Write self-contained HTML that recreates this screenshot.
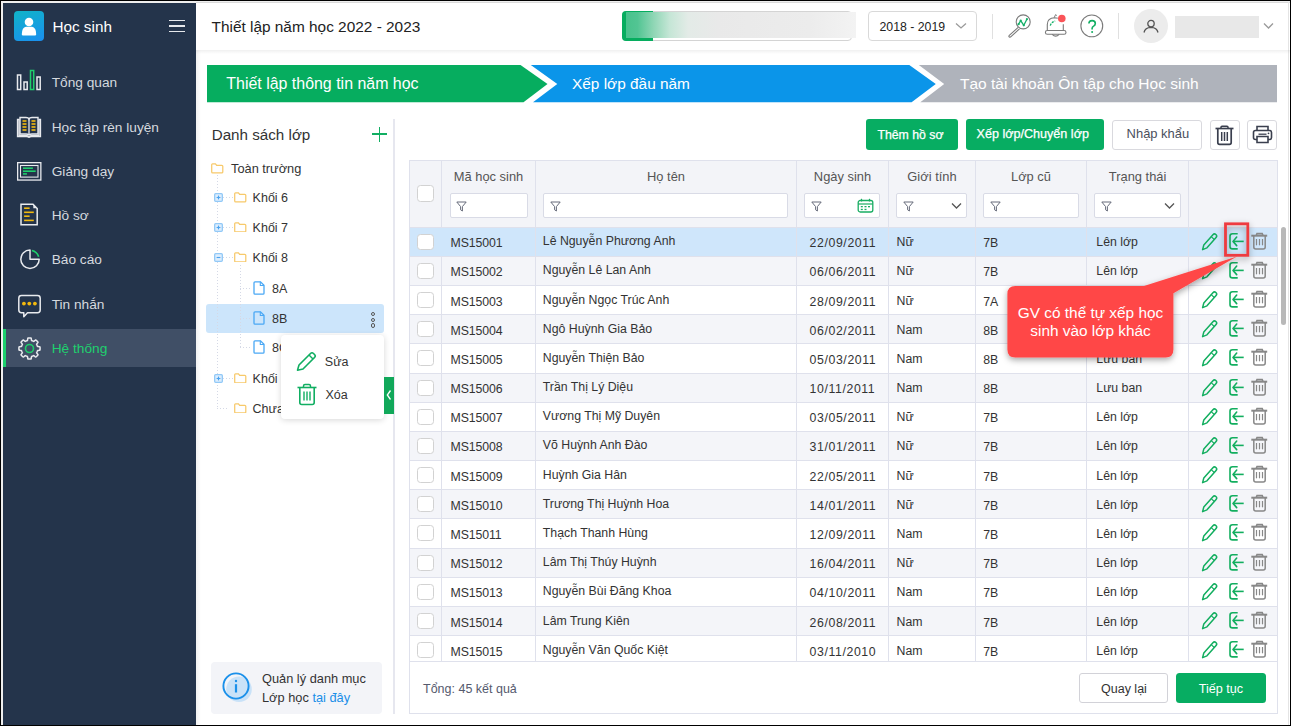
<!DOCTYPE html>
<html><head><meta charset="utf-8"><title>Thiết lập năm học</title>
<style>
html,body{margin:0;padding:0;}
body{width:1291px;height:726px;overflow:hidden;background:#000;position:relative;font-family:'Liberation Sans', sans-serif;}
.a{position:absolute;}
.t{position:absolute;white-space:nowrap;font-family:'Liberation Sans', sans-serif;}
svg{display:block;}
</style></head><body>
<div class="a" style="left:1px;top:1px;width:1289px;height:724px;background:#efefef;"></div><div class="a" style="left:196px;top:2px;width:1094px;height:723px;background:#fff;"></div><div class="a" style="left:3px;top:3px;width:193px;height:722px;background:#24344b;"></div><div class="a" style="left:14px;top:11px;width:30px;height:30px;border-radius:4px;background:linear-gradient(160deg,#10b4c8,#1a8ff0);"></div><svg class="a" style="left:14px;top:11px" width="30" height="30" viewBox="0 0 30 30"><circle cx="15" cy="11" r="4.3" fill="#fff"/><path d="M7.8 23.5 Q7.8 16.5 12 15.8 L18 15.8 Q22.2 16.5 22.2 23.5 Q22.2 24.5 21 24.5 L9 24.5 Q7.8 24.5 7.8 23.5Z" fill="#fff"/></svg><div class="t " style="left:52.4px;top:18.8px;font-size:15.3px;line-height:15.3px;color:#fff;">Học sinh</div><div class="a" style="left:169px;top:19.7px;width:16px;height:1.6px;background:#e6e8ec;"></div><div class="a" style="left:169px;top:25.2px;width:16px;height:1.6px;background:#e6e8ec;"></div><div class="a" style="left:169px;top:30.7px;width:16px;height:1.6px;background:#e6e8ec;"></div><div class="a" style="left:3px;top:329px;width:193px;height:38px;background:#404f66;"></div><div class="a" style="left:3px;top:329px;width:3px;height:38px;background:#1ccf6c;"></div><div class="t " style="left:51.7px;top:76.4px;font-size:13.7px;line-height:13.7px;color:#d5d9df;">Tổng quan</div><div class="t " style="left:51.7px;top:121.4px;font-size:13.7px;line-height:13.7px;color:#d5d9df;">Học tập rèn luyện</div><div class="t " style="left:51.7px;top:165.4px;font-size:13.7px;line-height:13.7px;color:#d5d9df;">Giảng dạy</div><div class="t " style="left:51.7px;top:209.4px;font-size:13.7px;line-height:13.7px;color:#d5d9df;">Hồ sơ</div><div class="t " style="left:51.7px;top:253.4px;font-size:13.7px;line-height:13.7px;color:#d5d9df;">Báo cáo</div><div class="t " style="left:51.7px;top:298.4px;font-size:13.7px;line-height:13.7px;color:#d5d9df;">Tin nhắn</div><div class="t " style="left:51.7px;top:342.4px;font-size:13.7px;line-height:13.7px;color:#1fd06e;">Hệ thống</div><svg class="a" style="left:16px;top:69px" width="26" height="22" viewBox="0 0 26 22">
<rect x="1.5" y="6" width="3.2" height="14.5" fill="none" stroke="#e8eaee" stroke-width="1.5"/>
<rect x="8" y="13" width="3.2" height="7.5" fill="none" stroke="#e8eaee" stroke-width="1.5"/>
<rect x="14.5" y="1.5" width="3.2" height="19" fill="none" stroke="#1fcf6c" stroke-width="1.5"/>
<rect x="21" y="8" width="3.2" height="12.5" fill="none" stroke="#e8eaee" stroke-width="1.5"/>
</svg><svg class="a" style="left:16px;top:116px" width="26" height="22" viewBox="0 0 26 22">
<path d="M1.5 3.5 H3 V19.5 H10 Q12 19.5 13 21 Q14 19.5 16 19.5 H23 V3.5 H24.5 V20.5 H15.5 Q13.5 20.5 13 21.5 Q12.5 20.5 10.5 20.5 H1.5Z" fill="none" stroke="#e8eaee" stroke-width="1.3"/>
<path d="M4 1.5 H10 Q12.5 1.5 13 3 Q13.5 1.5 16 1.5 H22 V18 H16 Q14 18 13 19 Q12 18 10 18 H4Z" fill="none" stroke="#e8eaee" stroke-width="1.4"/>
<line x1="13" y1="3" x2="13" y2="18.5" stroke="#e8eaee" stroke-width="1.3"/>
<g stroke="#f2b90f" stroke-width="1.6"><line x1="6.5" y1="5" x2="10.5" y2="5"/><line x1="6.5" y1="8" x2="10.5" y2="8"/><line x1="6.5" y1="11" x2="10.5" y2="11"/><line x1="6.5" y1="14" x2="10.5" y2="14"/>
<line x1="15.5" y1="5" x2="19.5" y2="5"/><line x1="15.5" y1="8" x2="19.5" y2="8"/><line x1="15.5" y1="11" x2="19.5" y2="11"/><line x1="15.5" y1="14" x2="19.5" y2="14"/></g>
</svg><svg class="a" style="left:16px;top:161px" width="27" height="21" viewBox="0 0 27 21">
<rect x="1.65" y="1.65" width="23.2" height="17.4" fill="none" stroke="#e8eaee" stroke-width="1.3"/>
<rect x="4.5" y="4.5" width="17.5" height="11.6" fill="none" stroke="#e8eaee" stroke-width="1.1"/>
<g stroke="#1fcf6c" stroke-width="1.6"><line x1="7" y1="7.2" x2="16.9" y2="7.2"/><line x1="7" y1="10.2" x2="19.7" y2="10.2"/><line x1="7" y1="12.9" x2="10.9" y2="12.9"/></g>
</svg><svg class="a" style="left:19px;top:202px" width="20" height="25" viewBox="0 0 20 25">
<path d="M2 2.2 H14 L18.2 6.5 V22.8 H2Z" fill="none" stroke="#e8eaee" stroke-width="1.5"/>
<path d="M14.3 2.2 L18.2 6.3 H14.3Z" fill="#e8eaee"/>
<g stroke="#f2b90f" stroke-width="1.6"><line x1="5.1" y1="6.2" x2="10.6" y2="6.2"/><line x1="5.1" y1="10.3" x2="14.8" y2="10.3"/><line x1="5.1" y1="14.2" x2="10.6" y2="14.2"/><line x1="5.1" y1="18.4" x2="14.8" y2="18.4"/></g>
</svg><svg class="a" style="left:14px;top:244px" width="32" height="32" viewBox="14 244 32 32">
<path d="M30 250.1 A9.2 9.2 0 1 0 39.2 259.3 H30 Z" fill="none" stroke="#e8eaee" stroke-width="1.5" stroke-linejoin="round"/>
<path d="M31.9 250.5 A9 9 0 0 1 38.65 256.8" fill="none" stroke="#1fcf6c" stroke-width="1.6"/>
</svg><svg class="a" style="left:17px;top:294px" width="25" height="25" viewBox="0 0 25 25">
<path d="M4.5 1.5 H20.5 Q23.2 1.5 23.2 4.2 V16 Q23.2 18.7 20.5 18.7 H10.5 L6.8 22.8 V18.7 H4.5 Q1.8 18.7 1.8 16 V4.2 Q1.8 1.5 4.5 1.5Z" fill="none" stroke="#e8eaee" stroke-width="1.5" stroke-linejoin="round"/>
<g fill="#f2b90f"><circle cx="6.9" cy="9.6" r="1.9"/><circle cx="12.3" cy="9.6" r="1.9"/><circle cx="17.9" cy="9.6" r="1.9"/></g>
</svg><svg class="a" style="left:16.8px;top:335.8px" width="25" height="25" viewBox="0 0 25 25">
<path d="M12.50 1.90 L12.68 1.90 L12.87 1.91 L13.05 1.91 L13.24 1.93 L13.42 1.94 L13.61 1.96 L13.79 1.98 L13.98 2.00 L14.14 2.15 L14.26 2.51 L14.34 3.01 L14.40 3.57 L14.45 4.07 L14.51 4.43 L14.62 4.58 L14.76 4.62 L14.90 4.66 L15.03 4.70 L15.17 4.75 L15.30 4.79 L15.44 4.84 L15.57 4.90 L15.70 4.95 L15.84 5.01 L15.97 5.07 L16.09 5.13 L16.22 5.19 L16.35 5.26 L16.48 5.33 L16.60 5.40 L16.78 5.37 L17.08 5.16 L17.47 4.84 L17.91 4.49 L18.32 4.19 L18.66 4.02 L18.88 4.03 L19.03 4.15 L19.17 4.26 L19.31 4.38 L19.45 4.50 L19.59 4.62 L19.73 4.75 L19.86 4.87 L20.00 5.00 L20.13 5.14 L20.25 5.27 L20.38 5.41 L20.50 5.55 L20.62 5.69 L20.74 5.83 L20.85 5.97 L20.97 6.12 L20.98 6.34 L20.81 6.68 L20.51 7.09 L20.16 7.53 L19.84 7.92 L19.63 8.22 L19.60 8.40 L19.67 8.52 L19.74 8.65 L19.81 8.78 L19.87 8.91 L19.93 9.03 L19.99 9.16 L20.05 9.30 L20.10 9.43 L20.16 9.56 L20.21 9.70 L20.25 9.83 L20.30 9.97 L20.34 10.10 L20.38 10.24 L20.42 10.38 L20.57 10.49 L20.93 10.55 L21.43 10.60 L21.99 10.66 L22.49 10.74 L22.85 10.86 L23.00 11.02 L23.02 11.21 L23.04 11.39 L23.06 11.58 L23.07 11.76 L23.09 11.95 L23.09 12.13 L23.10 12.32 L23.10 12.50 L23.10 12.68 L23.09 12.87 L23.09 13.05 L23.07 13.24 L23.06 13.42 L23.04 13.61 L23.02 13.79 L23.00 13.98 L22.85 14.14 L22.49 14.26 L21.99 14.34 L21.43 14.40 L20.93 14.45 L20.57 14.51 L20.42 14.62 L20.38 14.76 L20.34 14.90 L20.30 15.03 L20.25 15.17 L20.21 15.30 L20.16 15.44 L20.10 15.57 L20.05 15.70 L19.99 15.84 L19.93 15.97 L19.87 16.09 L19.81 16.22 L19.74 16.35 L19.67 16.48 L19.60 16.60 L19.63 16.78 L19.84 17.08 L20.16 17.47 L20.51 17.91 L20.81 18.32 L20.98 18.66 L20.97 18.88 L20.85 19.03 L20.74 19.17 L20.62 19.31 L20.50 19.45 L20.38 19.59 L20.25 19.73 L20.13 19.86 L20.00 20.00 L19.86 20.13 L19.73 20.25 L19.59 20.38 L19.45 20.50 L19.31 20.62 L19.17 20.74 L19.03 20.85 L18.88 20.97 L18.66 20.98 L18.32 20.81 L17.91 20.51 L17.47 20.16 L17.08 19.84 L16.78 19.63 L16.60 19.60 L16.48 19.67 L16.35 19.74 L16.22 19.81 L16.09 19.87 L15.97 19.93 L15.84 19.99 L15.70 20.05 L15.57 20.10 L15.44 20.16 L15.30 20.21 L15.17 20.25 L15.03 20.30 L14.90 20.34 L14.76 20.38 L14.62 20.42 L14.51 20.57 L14.45 20.93 L14.40 21.43 L14.34 21.99 L14.26 22.49 L14.14 22.85 L13.98 23.00 L13.79 23.02 L13.61 23.04 L13.42 23.06 L13.24 23.07 L13.05 23.09 L12.87 23.09 L12.68 23.10 L12.50 23.10 L12.32 23.10 L12.13 23.09 L11.95 23.09 L11.76 23.07 L11.58 23.06 L11.39 23.04 L11.21 23.02 L11.02 23.00 L10.86 22.85 L10.74 22.49 L10.66 21.99 L10.60 21.43 L10.55 20.93 L10.49 20.57 L10.38 20.42 L10.24 20.38 L10.10 20.34 L9.97 20.30 L9.83 20.25 L9.70 20.21 L9.56 20.16 L9.43 20.10 L9.30 20.05 L9.16 19.99 L9.03 19.93 L8.91 19.87 L8.78 19.81 L8.65 19.74 L8.52 19.67 L8.40 19.60 L8.22 19.63 L7.92 19.84 L7.53 20.16 L7.09 20.51 L6.68 20.81 L6.34 20.98 L6.12 20.97 L5.97 20.85 L5.83 20.74 L5.69 20.62 L5.55 20.50 L5.41 20.38 L5.27 20.25 L5.14 20.13 L5.00 20.00 L4.87 19.86 L4.75 19.73 L4.62 19.59 L4.50 19.45 L4.38 19.31 L4.26 19.17 L4.15 19.03 L4.03 18.88 L4.02 18.66 L4.19 18.32 L4.49 17.91 L4.84 17.47 L5.16 17.08 L5.37 16.78 L5.40 16.60 L5.33 16.48 L5.26 16.35 L5.19 16.22 L5.13 16.09 L5.07 15.97 L5.01 15.84 L4.95 15.70 L4.90 15.57 L4.84 15.44 L4.79 15.30 L4.75 15.17 L4.70 15.03 L4.66 14.90 L4.62 14.76 L4.58 14.62 L4.43 14.51 L4.07 14.45 L3.57 14.40 L3.01 14.34 L2.51 14.26 L2.15 14.14 L2.00 13.98 L1.98 13.79 L1.96 13.61 L1.94 13.42 L1.93 13.24 L1.91 13.05 L1.91 12.87 L1.90 12.68 L1.90 12.50 L1.90 12.32 L1.91 12.13 L1.91 11.95 L1.93 11.76 L1.94 11.58 L1.96 11.39 L1.98 11.21 L2.00 11.02 L2.15 10.86 L2.51 10.74 L3.01 10.66 L3.57 10.60 L4.07 10.55 L4.43 10.49 L4.58 10.38 L4.62 10.24 L4.66 10.10 L4.70 9.97 L4.75 9.83 L4.79 9.70 L4.84 9.56 L4.90 9.43 L4.95 9.30 L5.01 9.16 L5.07 9.03 L5.13 8.91 L5.19 8.78 L5.26 8.65 L5.33 8.52 L5.40 8.40 L5.37 8.22 L5.16 7.92 L4.84 7.53 L4.49 7.09 L4.19 6.68 L4.02 6.34 L4.03 6.12 L4.15 5.97 L4.26 5.83 L4.38 5.69 L4.50 5.55 L4.62 5.41 L4.75 5.27 L4.87 5.14 L5.00 5.00 L5.14 4.87 L5.27 4.75 L5.41 4.62 L5.55 4.50 L5.69 4.38 L5.83 4.26 L5.97 4.15 L6.12 4.03 L6.34 4.02 L6.68 4.19 L7.09 4.49 L7.53 4.84 L7.92 5.16 L8.22 5.37 L8.40 5.40 L8.52 5.33 L8.65 5.26 L8.78 5.19 L8.91 5.13 L9.03 5.07 L9.16 5.01 L9.30 4.95 L9.43 4.90 L9.56 4.84 L9.70 4.79 L9.83 4.75 L9.97 4.70 L10.10 4.66 L10.24 4.62 L10.38 4.58 L10.49 4.43 L10.55 4.07 L10.60 3.57 L10.66 3.01 L10.74 2.51 L10.86 2.15 L11.02 2.00 L11.21 1.98 L11.39 1.96 L11.58 1.94 L11.76 1.93 L11.95 1.91 L12.13 1.91 L12.32 1.90Z" fill="none" stroke="#e8eaee" stroke-width="1.5" stroke-linejoin="round"/>
<circle cx="12.5" cy="12.5" r="4" fill="none" stroke="#1fcf6c" stroke-width="1.6"/>
</svg><div class="a" style="left:196px;top:50px;width:5px;height:675px;background:linear-gradient(90deg,rgba(0,0,0,0.06),rgba(0,0,0,0));"></div><div class="a" style="left:196px;top:2px;width:1094px;height:48px;background:#fff;"></div><div class="a" style="left:196px;top:2px;width:1094px;height:1px;background:#dadada;"></div><div class="a" style="left:1288px;top:2px;width:1px;height:723px;background:#e4e4e4;"></div><div class="a" style="left:196px;top:50px;width:1094px;height:4px;background:linear-gradient(180deg,rgba(0,0,0,0.06),rgba(0,0,0,0));"></div><div class="t " style="left:211.5px;top:18.8px;font-size:15.4px;line-height:15.4px;color:#222;">Thiết lập năm học 2022 - 2023</div><div class="a" style="left:622px;top:11px;width:230px;height:30px;border-radius:4px;box-sizing:border-box;border:1px solid #d4d4d4;"></div><div class="a" style="left:622px;top:11px;width:31px;height:30px;border-radius:4px 0 0 4px;background:#06ad5f;"></div><div class="a" style="left:626px;top:12px;width:230px;height:26px;background:linear-gradient(90deg,#48c28c 0%,#52c593 5%,#8fd6b5 12%,#c5e6d6 19%,#e3ebe7 27%,#e9e9e9 40%,#ececec 80%,#f3f3f3 100%);"></div><div class="a" style="left:868px;top:11px;width:109px;height:30px;border-radius:4px;box-sizing:border-box;border:1px solid #d9d9d9;background:#fff;"></div><div class="t " style="left:879.5px;top:20.6px;font-size:12.3px;line-height:12.3px;color:#222;">2018 - 2019</div><svg class="a" style="left:955px;top:22px" width="12" height="8" viewBox="0 0 12 8"><path d="M1 1.5 L6 6 L11 1.5" fill="none" stroke="#9a9a9a" stroke-width="1.3"/></svg><div class="a" style="left:992px;top:14px;width:1px;height:25px;background:#e0e0e0;"></div><svg class="a" style="left:1004px;top:10px" width="30" height="30" viewBox="1004 10 30 30">
<circle cx="1023.2" cy="21.9" r="7" fill="none" stroke="#7a7a7a" stroke-width="1.1"/>
<path d="M1018.2 27.4 L1009.3 35.3 Q1008.3 36.3 1009.4 37 Q1010.2 37.5 1011 36.6 L1019.5 28.9" fill="none" stroke="#7a7a7a" stroke-width="1.1"/>
<path d="M1018.6 24.2 L1020.7 20.6 L1023.8 25.3 L1026.9 19.2" fill="none" stroke="#14b068" stroke-width="1.3" stroke-linejoin="round"/>
<g fill="#14b068"><circle cx="1018.6" cy="24.2" r="1.1"/><circle cx="1020.7" cy="20.6" r="1.1"/><circle cx="1023.8" cy="25.3" r="1.1"/><circle cx="1026.9" cy="19.2" r="1.1"/></g>
</svg><svg class="a" style="left:1040px;top:10px" width="30" height="30" viewBox="1040 10 30 30">
<path d="M1047.3 30.5 V24.5 Q1047.3 17.9 1054.6 17.7 Q1056.5 17.7 1057.8 18.2" fill="none" stroke="#7a7a7a" stroke-width="1.1"/>
<path d="M1063.3 24.2 V30.5" fill="none" stroke="#7a7a7a" stroke-width="1.1"/>
<rect x="1045.4" y="30.5" width="20.6" height="3.8" rx="1.9" fill="none" stroke="#7a7a7a" stroke-width="1.1"/>
<path d="M1052.2 34.3 Q1055.7 37.8 1059.2 34.3" fill="none" stroke="#7a7a7a" stroke-width="1.1"/>
<path d="M1054.2 17.6 L1055.6 14.6 L1056.8 15.6" fill="none" stroke="#7a7a7a" stroke-width="1"/>
<path d="M1050.3 25.6 Q1051.3 22.2 1055.2 21" fill="none" stroke="#14b068" stroke-width="1.3" stroke-dasharray="2.2 1"/>
<circle cx="1061.8" cy="18.5" r="3.8" fill="#fa5458"/>
</svg><svg class="a" style="left:1078px;top:12px" width="28" height="28" viewBox="1078 12 28 28">
<circle cx="1091.8" cy="25.9" r="10.9" fill="none" stroke="#7a7a7a" stroke-width="1.1"/>
<path d="M1088.9 23.6 Q1088.9 20.6 1092.1 20.6 Q1095.3 20.6 1095.3 23.4 Q1095.3 25.1 1093.6 26.1 Q1092.1 26.9 1092.1 28.6 V29.4" fill="none" stroke="#11ae62" stroke-width="1.6"/>
<circle cx="1092.1" cy="32" r="1" fill="#11ae62"/>
</svg><div class="a" style="left:1118px;top:13px;width:1px;height:26px;background:#e0e0e0;"></div><div class="a" style="left:1134px;top:9px;width:34px;height:34px;border-radius:50%;background:#ececec;"></div><svg class="a" style="left:1141px;top:18.8px" width="20" height="16" viewBox="0 0 20 16">
<circle cx="10" cy="4.6" r="3.2" fill="none" stroke="#555" stroke-width="1.3"/>
<path d="M3 13.5 Q4 8.5 10 8.3 Q16 8.5 17 13.5" fill="none" stroke="#555" stroke-width="1.3"/>
</svg><div class="a" style="left:1175px;top:16px;width:84px;height:22px;background:#e8e8e8;"></div><svg class="a" style="left:1263px;top:22px" width="11" height="8" viewBox="0 0 11 8"><path d="M1 1.5 L5.5 6 L10 1.5" fill="none" stroke="#9a9a9a" stroke-width="1.3"/></svg><svg class="a" style="left:207px;top:65px" width="1071" height="38" viewBox="0 0 1071 38">
<path d="M0 0 H313.5 L340.5 18.9 L316.5 37.3 H0Z" fill="#06ad5f"/>
<path d="M323.8 0 H702.3 L728.8 18.9 L704.6 37.3 H326 L350.3 18.9Z" fill="#0b95e9"/>
<path d="M711.8 0 H1070 V37.3 H713.3 L737.2 18.9Z" fill="#afb3bb"/>
</svg><div class="t " style="left:226.3px;top:75.5px;font-size:15.95px;line-height:15.95px;color:#fff;">Thiết lập thông tin năm học</div><div class="t " style="left:572.0px;top:76.0px;font-size:15.4px;line-height:15.4px;color:#fff;">Xếp lớp đầu năm</div><div class="t " style="left:960.0px;top:75.9px;font-size:15.5px;line-height:15.5px;color:#fff;">Tạo tài khoản Ôn tập cho Học sinh</div><div class="t " style="left:211.7px;top:127.3px;font-size:15.2px;line-height:15.2px;color:#333;">Danh sách lớp</div><div class="a" style="left:372px;top:133.2px;width:15px;height:1.6px;background:#11ae62;"></div><div class="a" style="left:378.7px;top:127px;width:1.6px;height:15px;background:#11ae62;"></div><div class="a" style="left:393px;top:119px;width:2px;height:595px;background:#e6e7ef;"></div><div class="a" style="left:217px;top:175px;width:1px;height:234px;background-image:linear-gradient(#d5d9e6 33%, transparent 33%);background-size:1px 3px;"></div><div class="a" style="left:240px;top:265px;width:1px;height:83px;background-image:linear-gradient(#d5d9e6 33%, transparent 33%);background-size:1px 3px;"></div><div class="a" style="left:223px;top:197px;width:11px;height:1px;background-image:linear-gradient(90deg,#d5d9e6 33%, transparent 33%);background-size:3px 1px;"></div><div class="a" style="left:223px;top:227px;width:11px;height:1px;background-image:linear-gradient(90deg,#d5d9e6 33%, transparent 33%);background-size:3px 1px;"></div><div class="a" style="left:223px;top:257px;width:11px;height:1px;background-image:linear-gradient(90deg,#d5d9e6 33%, transparent 33%);background-size:3px 1px;"></div><div class="a" style="left:223px;top:378px;width:11px;height:1px;background-image:linear-gradient(90deg,#d5d9e6 33%, transparent 33%);background-size:3px 1px;"></div><div class="a" style="left:217px;top:408px;width:12px;height:1px;background-image:linear-gradient(90deg,#d5d9e6 33%, transparent 33%);background-size:3px 1px;"></div><div class="a" style="left:240px;top:288px;width:12px;height:1px;background-image:linear-gradient(90deg,#d5d9e6 33%, transparent 33%);background-size:3px 1px;"></div><div class="a" style="left:240px;top:347px;width:12px;height:1px;background-image:linear-gradient(90deg,#d5d9e6 33%, transparent 33%);background-size:3px 1px;"></div><svg class="a" style="left:211px;top:163px" width="12.5" height="10.5" viewBox="0 0 13 11"><path d="M0.7 2 Q0.7 0.8 1.7 0.8 H4.6 L5.9 2.4 H11.3 Q12.3 2.4 12.3 3.4 V9.3 Q12.3 10.3 11.3 10.3 H1.7 Q0.7 10.3 0.7 9.3Z" fill="none" stroke="#f7c96a" stroke-width="1.3"/></svg><div class="t " style="left:231.0px;top:162.9px;font-size:12.8px;line-height:12.8px;color:#333;">Toàn trường</div><svg class="a" style="left:213.5px;top:193.3px" width="9" height="9" viewBox="0 0 9 9"><rect x="0.65" y="0.65" width="7.7" height="7.7" rx="1" fill="#dcedfd" stroke="#92c9f7" stroke-width="1.3"/><line x1="2.6" y1="4.5" x2="6.4" y2="4.5" stroke="#4aa3f0" stroke-width="1.1"/><line x1="4.5" y1="2.6" x2="4.5" y2="6.4" stroke="#4aa3f0" stroke-width="1.1"/></svg><svg class="a" style="left:234px;top:192.3px" width="12.5" height="10.5" viewBox="0 0 13 11"><path d="M0.7 2 Q0.7 0.8 1.7 0.8 H4.6 L5.9 2.4 H11.3 Q12.3 2.4 12.3 3.4 V9.3 Q12.3 10.3 11.3 10.3 H1.7 Q0.7 10.3 0.7 9.3Z" fill="none" stroke="#f7c96a" stroke-width="1.3"/></svg><div class="t " style="left:252.6px;top:192.2px;font-size:12.5px;line-height:12.5px;color:#333;">Khối 6</div><svg class="a" style="left:213.5px;top:222.9px" width="9" height="9" viewBox="0 0 9 9"><rect x="0.65" y="0.65" width="7.7" height="7.7" rx="1" fill="#dcedfd" stroke="#92c9f7" stroke-width="1.3"/><line x1="2.6" y1="4.5" x2="6.4" y2="4.5" stroke="#4aa3f0" stroke-width="1.1"/><line x1="4.5" y1="2.6" x2="4.5" y2="6.4" stroke="#4aa3f0" stroke-width="1.1"/></svg><svg class="a" style="left:234px;top:221.9px" width="12.5" height="10.5" viewBox="0 0 13 11"><path d="M0.7 2 Q0.7 0.8 1.7 0.8 H4.6 L5.9 2.4 H11.3 Q12.3 2.4 12.3 3.4 V9.3 Q12.3 10.3 11.3 10.3 H1.7 Q0.7 10.3 0.7 9.3Z" fill="none" stroke="#f7c96a" stroke-width="1.3"/></svg><div class="t " style="left:252.6px;top:221.8px;font-size:12.5px;line-height:12.5px;color:#333;">Khối 7</div><svg class="a" style="left:213.5px;top:252.8px" width="9" height="9" viewBox="0 0 9 9"><rect x="0.65" y="0.65" width="7.7" height="7.7" rx="1" fill="#dcedfd" stroke="#92c9f7" stroke-width="1.3"/><line x1="2.6" y1="4.5" x2="6.4" y2="4.5" stroke="#4aa3f0" stroke-width="1.1"/></svg><svg class="a" style="left:234px;top:251.8px" width="12.5" height="10.5" viewBox="0 0 13 11"><path d="M0.7 2 Q0.7 0.8 1.7 0.8 H4.6 L5.9 2.4 H11.3 Q12.3 2.4 12.3 3.4 V9.3 Q12.3 10.3 11.3 10.3 H1.7 Q0.7 10.3 0.7 9.3Z" fill="none" stroke="#f7c96a" stroke-width="1.3"/></svg><div class="t " style="left:252.6px;top:251.7px;font-size:12.5px;line-height:12.5px;color:#333;">Khối 8</div><svg class="a" style="left:213.5px;top:373.7px" width="9" height="9" viewBox="0 0 9 9"><rect x="0.65" y="0.65" width="7.7" height="7.7" rx="1" fill="#dcedfd" stroke="#92c9f7" stroke-width="1.3"/><line x1="2.6" y1="4.5" x2="6.4" y2="4.5" stroke="#4aa3f0" stroke-width="1.1"/><line x1="4.5" y1="2.6" x2="4.5" y2="6.4" stroke="#4aa3f0" stroke-width="1.1"/></svg><svg class="a" style="left:234px;top:372.7px" width="12.5" height="10.5" viewBox="0 0 13 11"><path d="M0.7 2 Q0.7 0.8 1.7 0.8 H4.6 L5.9 2.4 H11.3 Q12.3 2.4 12.3 3.4 V9.3 Q12.3 10.3 11.3 10.3 H1.7 Q0.7 10.3 0.7 9.3Z" fill="none" stroke="#f7c96a" stroke-width="1.3"/></svg><div class="t " style="left:252.6px;top:372.6px;font-size:12.5px;line-height:12.5px;color:#333;">Khối 9</div><svg class="a" style="left:234px;top:402.5px" width="12.5" height="10.5" viewBox="0 0 13 11"><path d="M0.7 2 Q0.7 0.8 1.7 0.8 H4.6 L5.9 2.4 H11.3 Q12.3 2.4 12.3 3.4 V9.3 Q12.3 10.3 11.3 10.3 H1.7 Q0.7 10.3 0.7 9.3Z" fill="none" stroke="#f7c96a" stroke-width="1.3"/></svg><div class="t " style="left:252.6px;top:402.6px;font-size:12.5px;line-height:12.5px;color:#333;">Chưa phân khối</div><div class="a" style="left:206px;top:304px;width:178px;height:29px;border-radius:3px;background:#cce5fb;"></div><div class="a" style="left:217px;top:304px;width:1px;height:29px;background-image:linear-gradient(#d5d9e6 33%, transparent 33%);background-size:1px 3px;"></div><div class="a" style="left:240px;top:304px;width:1px;height:29px;background-image:linear-gradient(#d5d9e6 33%, transparent 33%);background-size:1px 3px;"></div><div class="a" style="left:240px;top:318px;width:12px;height:1px;background-image:linear-gradient(90deg,#d5d9e6 33%, transparent 33%);background-size:3px 1px;"></div><svg class="a" style="left:253px;top:280.8px" width="12" height="14" viewBox="0 0 12 14"><path d="M1 1.8 Q1 0.8 2 0.8 H7.5 L11 4.3 V12.2 Q11 13.2 10 13.2 H2 Q1 13.2 1 12.2Z" fill="none" stroke="#4aa8f5" stroke-width="1.3"/><path d="M7.3 0.8 V4.5 H11" fill="none" stroke="#4aa8f5" stroke-width="1.1"/></svg><div class="t " style="left:272.0px;top:282.8px;font-size:12.5px;line-height:12.5px;color:#333;">8A</div><svg class="a" style="left:253px;top:311.0px" width="12" height="14" viewBox="0 0 12 14"><path d="M1 1.8 Q1 0.8 2 0.8 H7.5 L11 4.3 V12.2 Q11 13.2 10 13.2 H2 Q1 13.2 1 12.2Z" fill="none" stroke="#4aa8f5" stroke-width="1.3"/><path d="M7.3 0.8 V4.5 H11" fill="none" stroke="#4aa8f5" stroke-width="1.1"/></svg><div class="t " style="left:272.0px;top:313.0px;font-size:12.5px;line-height:12.5px;color:#333;">8B</div><svg class="a" style="left:253px;top:339.8px" width="12" height="14" viewBox="0 0 12 14"><path d="M1 1.8 Q1 0.8 2 0.8 H7.5 L11 4.3 V12.2 Q11 13.2 10 13.2 H2 Q1 13.2 1 12.2Z" fill="none" stroke="#4aa8f5" stroke-width="1.3"/><path d="M7.3 0.8 V4.5 H11" fill="none" stroke="#4aa8f5" stroke-width="1.1"/></svg><div class="t " style="left:272.0px;top:341.8px;font-size:12.5px;line-height:12.5px;color:#333;">8C</div><div class="a" style="left:370.6px;top:311.6px;width:4.4px;height:4.4px;box-sizing:border-box;border:1.2px solid #555;border-radius:50%;"></div><div class="a" style="left:370.6px;top:317.5px;width:4.4px;height:4.4px;box-sizing:border-box;border:1.2px solid #555;border-radius:50%;"></div><div class="a" style="left:370.6px;top:323.4px;width:4.4px;height:4.4px;box-sizing:border-box;border:1.2px solid #555;border-radius:50%;"></div><div class="a" style="left:281px;top:334.5px;width:103px;height:84px;border-radius:4px;background:#fff;box-shadow:0 1px 6px rgba(0,0,0,0.16);"></div><svg class="a" style="left:295px;top:351px" width="22" height="21" viewBox="0 0 22 21">
<path d="M2.5 19.2 L4 14 L15.5 2.5 Q17 1 18.5 2.5 L19.5 3.5 Q21 5 19.5 6.5 L8 18 Z" fill="none" stroke="#11ae62" stroke-width="1.6" stroke-linejoin="round"/>
<line x1="14" y1="4" x2="18" y2="8" stroke="#11ae62" stroke-width="1.4"/>
</svg><div class="t " style="left:324.8px;top:355.6px;font-size:12.5px;line-height:12.5px;color:#333;">Sửa</div><svg class="a" style="left:296px;top:383px" width="22" height="23" viewBox="0 0 22 23">
<path d="M1.5 4.5 H20.5" stroke="#11ae62" stroke-width="1.6"/>
<path d="M7.5 4.5 V3 Q7.5 1.5 9 1.5 H13 Q14.5 1.5 14.5 3 V4.5" fill="none" stroke="#11ae62" stroke-width="1.5"/>
<path d="M3.8 4.5 V19.5 Q3.8 21.5 5.8 21.5 H16.2 Q18.2 21.5 18.2 19.5 V4.5" fill="none" stroke="#11ae62" stroke-width="1.6"/>
<g stroke="#11ae62" stroke-width="1.4"><line x1="8" y1="8.5" x2="8" y2="17.5"/><line x1="11" y1="8.5" x2="11" y2="17.5"/><line x1="14" y1="8.5" x2="14" y2="17.5"/></g>
</svg><div class="t " style="left:325.5px;top:389.1px;font-size:12.5px;line-height:12.5px;color:#333;">Xóa</div><div class="a" style="left:384px;top:376.5px;width:10px;height:37.5px;background:#11a85a;"></div><svg class="a" style="left:385px;top:389px" width="8" height="12" viewBox="0 0 8 12"><path d="M5.5 1.5 L2.3 6 L5.5 10.5" fill="none" stroke="#fff" stroke-width="1.3"/></svg><div class="a" style="left:211px;top:661.5px;width:171px;height:52px;border-radius:4px;background:#f3f4f8;"></div><svg class="a" style="left:219px;top:669px" width="36" height="36" viewBox="0 0 36 36">
<circle cx="20" cy="20.3" r="12.8" fill="#c9e2f8"/>
<circle cx="17" cy="17" r="12.6" fill="none" stroke="#1a90ea" stroke-width="1.9"/>
<line x1="17" y1="15.2" x2="17" y2="23.5" stroke="#1a90ea" stroke-width="2.2"/>
<circle cx="17" cy="12" r="1.2" fill="#1a90ea"/>
</svg><div class="t " style="left:262.0px;top:672.9px;font-size:12.8px;line-height:12.8px;color:#333;">Quản lý danh mục</div><div class="t " style="left:262.0px;top:692.1px;font-size:12.8px;line-height:12.8px;color:#333;">Lớp học <span style="color:#1a8fe8">tại đây</span></div><div class="a" style="left:866px;top:119px;width:92px;height:30.5px;border-radius:3px;background:#07ad62;"></div><div class="t " style="left:877.4px;top:128.7px;font-size:12.3px;line-height:12.3px;color:#fff;-webkit-text-stroke:0.25px #fff;">Thêm hồ sơ</div><div class="a" style="left:966px;top:119px;width:138px;height:30.5px;border-radius:3px;background:#07ad62;"></div><div class="t " style="left:976.5px;top:128.4px;font-size:12.6px;line-height:12.6px;color:#fff;-webkit-text-stroke:0.25px #fff;">Xếp lớp/Chuyển lớp</div><div class="a" style="left:1111.5px;top:119.5px;width:90px;height:30px;border-radius:3px;box-sizing:border-box;border:1px solid #d9d9de;background:#fff;"></div><div class="t " style="left:1126.6px;top:128.1px;font-size:12.95px;line-height:12.95px;color:#4a4f5c;">Nhập khẩu</div><div class="a" style="left:1209.5px;top:119.5px;width:30px;height:30px;border-radius:3px;box-sizing:border-box;border:1px solid #d9d9de;background:#fff;"></div><svg class="a" style="left:1214px;top:125px" width="21" height="21" viewBox="0 0 21 21">
<path d="M1.5 3.5 H19.5" stroke="#3a3f4e" stroke-width="1.7"/>
<path d="M7 3.3 V2.2 Q7 1.2 8 1.2 H13 Q14 1.2 14 2.2 V3.3" fill="none" stroke="#3a3f4e" stroke-width="1.5"/>
<path d="M3.8 3.5 V17.5 Q3.8 19.3 5.6 19.3 H15.4 Q17.2 19.3 17.2 17.5 V3.5" fill="none" stroke="#3a3f4e" stroke-width="1.7"/>
<g stroke="#3a3f4e" stroke-width="1.5"><line x1="7.7" y1="7" x2="7.7" y2="16"/><line x1="10.5" y1="7" x2="10.5" y2="16"/><line x1="13.3" y1="7" x2="13.3" y2="16"/></g>
</svg><div class="a" style="left:1247px;top:119.5px;width:30px;height:30px;border-radius:3px;box-sizing:border-box;border:1px solid #d9d9de;background:#fff;"></div><svg class="a" style="left:1252px;top:125px" width="21" height="19" viewBox="0 0 21 19">
<path d="M5 5.5 V1.5 H16 V5.5" fill="none" stroke="#3a3f4e" stroke-width="1.6"/>
<path d="M5 14.5 H3.5 Q1.5 14.5 1.5 12.5 V7.5 Q1.5 5.5 3.5 5.5 H17.5 Q19.5 5.5 19.5 7.5 V12.5 Q19.5 14.5 17.5 14.5 H16" fill="none" stroke="#3a3f4e" stroke-width="1.6"/>
<path d="M5 11.5 H16 V17.5 H5Z" fill="none" stroke="#3a3f4e" stroke-width="1.6"/>
<line x1="6.5" y1="9.2" x2="14.5" y2="9.2" stroke="#3a3f4e" stroke-width="1.3"/>
<circle cx="16.5" cy="8.3" r="0.9" fill="#3a3f4e"/>
</svg><div class="a" style="left:409.5px;top:160.5px;width:868.2px;height:67px;background:#f3f4f8;"></div><div class="a" style="left:0;top:227px;width:1291px;height:434px;overflow:hidden;"><div class="a" style="left:409.5px;top:1px;width:868.2px;height:29px;background:#cfe6fb;"></div><div class="a" style="left:417px;top:6.60px;width:16.5px;height:16.5px;box-sizing:border-box;border:1px solid #d2d2d2;border-radius:3.5px;background:#fff;"></div><div class="t " style="left:450.5px;top:9.7px;font-size:12.3px;line-height:12.3px;color:#333;letter-spacing:-0.1px;">MS15001</div><div class="t " style="left:542.8px;top:8.3px;font-size:12.3px;line-height:12.3px;color:#333;">Lê Nguyễn Phương Anh</div><div class="t " style="left:809.6px;top:9.7px;font-size:12.3px;line-height:12.3px;color:#333;letter-spacing:0.6px;">22/09/2011</div><div class="t " style="left:896.6px;top:8.9px;font-size:12.3px;line-height:12.3px;color:#333;">Nữ</div><div class="t " style="left:983.2px;top:9.7px;font-size:12.3px;line-height:12.3px;color:#333;">7B</div><div class="t " style="left:1096.3px;top:8.9px;font-size:12.3px;line-height:12.3px;color:#333;">Lên lớp</div><svg class="a" style="left:1198px;top:0.30px" width="72" height="29" viewBox="1198 0 72 29">
<g transform="translate(0 0.7)"><path d="M1202.6 21.9 L1203.8 17.36 L1212.93 7.01 A2.1 2.1 0 0 1 1216.08 9.79 L1206.96 20.14 Z" fill="none" stroke="#12ae5f" stroke-width="1.5" stroke-linejoin="round"/>
<line x1="1211.2" y1="8.96" x2="1214.35" y2="11.74" stroke="#12ae5f" stroke-width="1.2"/></g>
<path d="M1237.7 6.8 H1232.5 Q1230 6.8 1230 9.3 V19.4 Q1230 21.9 1232.5 21.9 H1237.7" fill="none" stroke="#12ae5f" stroke-width="1.6"/>
<path d="M1233.2 14.4 H1243.7" stroke="#12ae5f" stroke-width="1.6"/>
<path d="M1236.7 10.1 L1233 14.4 L1236.7 18.6" fill="none" stroke="#12ae5f" stroke-width="1.6" stroke-linejoin="round" stroke-linecap="round"/>
<line x1="1251.3" y1="8.7" x2="1267.2" y2="8.7" stroke="#888" stroke-width="2"/>
<path d="M1256.3 8.2 L1257 6.6 H1262.2 L1262.9 8.2" fill="none" stroke="#888" stroke-width="1.6"/>
<path d="M1253.8 8.6 V20 Q1253.8 22 1255.8 22 H1263.2 Q1265.2 22 1265.2 20 V8.6" fill="none" stroke="#888" stroke-width="1.5"/>
<g stroke="#888" stroke-width="1.2"><line x1="1256.5" y1="12" x2="1256.5" y2="18.3"/><line x1="1259.5" y1="12" x2="1259.5" y2="18.3"/><line x1="1262.5" y1="12" x2="1262.5" y2="18.3"/></g>
</svg><div class="a" style="left:409.5px;top:30px;width:868.2px;height:29px;background:#f4f5f9;"></div><div class="a" style="left:409.5px;top:29px;width:868.2px;height:1px;background:#dfe1ec;"></div><div class="a" style="left:417px;top:35.60px;width:16.5px;height:16.5px;box-sizing:border-box;border:1px solid #d2d2d2;border-radius:3.5px;background:#fff;"></div><div class="t " style="left:450.5px;top:38.7px;font-size:12.3px;line-height:12.3px;color:#333;letter-spacing:-0.1px;">MS15002</div><div class="t " style="left:542.8px;top:37.3px;font-size:12.3px;line-height:12.3px;color:#333;">Nguyễn Lê Lan Anh</div><div class="t " style="left:809.6px;top:38.7px;font-size:12.3px;line-height:12.3px;color:#333;letter-spacing:0.6px;">06/06/2011</div><div class="t " style="left:896.6px;top:37.9px;font-size:12.3px;line-height:12.3px;color:#333;">Nữ</div><div class="t " style="left:983.2px;top:38.7px;font-size:12.3px;line-height:12.3px;color:#333;">7B</div><div class="t " style="left:1096.3px;top:37.9px;font-size:12.3px;line-height:12.3px;color:#333;">Lên lớp</div><svg class="a" style="left:1198px;top:29.30px" width="72" height="29" viewBox="1198 0 72 29">
<g transform="translate(0 0.7)"><path d="M1202.6 21.9 L1203.8 17.36 L1212.93 7.01 A2.1 2.1 0 0 1 1216.08 9.79 L1206.96 20.14 Z" fill="none" stroke="#12ae5f" stroke-width="1.5" stroke-linejoin="round"/>
<line x1="1211.2" y1="8.96" x2="1214.35" y2="11.74" stroke="#12ae5f" stroke-width="1.2"/></g>
<path d="M1237.7 6.8 H1232.5 Q1230 6.8 1230 9.3 V19.4 Q1230 21.9 1232.5 21.9 H1237.7" fill="none" stroke="#12ae5f" stroke-width="1.6"/>
<path d="M1233.2 14.4 H1243.7" stroke="#12ae5f" stroke-width="1.6"/>
<path d="M1236.7 10.1 L1233 14.4 L1236.7 18.6" fill="none" stroke="#12ae5f" stroke-width="1.6" stroke-linejoin="round" stroke-linecap="round"/>
<line x1="1251.3" y1="8.7" x2="1267.2" y2="8.7" stroke="#888" stroke-width="2"/>
<path d="M1256.3 8.2 L1257 6.6 H1262.2 L1262.9 8.2" fill="none" stroke="#888" stroke-width="1.6"/>
<path d="M1253.8 8.6 V20 Q1253.8 22 1255.8 22 H1263.2 Q1265.2 22 1265.2 20 V8.6" fill="none" stroke="#888" stroke-width="1.5"/>
<g stroke="#888" stroke-width="1.2"><line x1="1256.5" y1="12" x2="1256.5" y2="18.3"/><line x1="1259.5" y1="12" x2="1259.5" y2="18.3"/><line x1="1262.5" y1="12" x2="1262.5" y2="18.3"/></g>
</svg><div class="a" style="left:409.5px;top:59px;width:868.2px;height:29px;background:#ffffff;"></div><div class="a" style="left:409.5px;top:58px;width:868.2px;height:1px;background:#dfe1ec;"></div><div class="a" style="left:417px;top:64.60px;width:16.5px;height:16.5px;box-sizing:border-box;border:1px solid #d2d2d2;border-radius:3.5px;background:#fff;"></div><div class="t " style="left:450.5px;top:68.7px;font-size:12.3px;line-height:12.3px;color:#333;letter-spacing:-0.1px;">MS15003</div><div class="t " style="left:542.8px;top:67.3px;font-size:12.3px;line-height:12.3px;color:#333;">Nguyễn Ngọc Trúc Anh</div><div class="t " style="left:809.6px;top:68.7px;font-size:12.3px;line-height:12.3px;color:#333;letter-spacing:0.6px;">28/09/2011</div><div class="t " style="left:896.6px;top:67.9px;font-size:12.3px;line-height:12.3px;color:#333;">Nữ</div><div class="t " style="left:983.2px;top:68.7px;font-size:12.3px;line-height:12.3px;color:#333;">7A</div><div class="t " style="left:1096.3px;top:67.9px;font-size:12.3px;line-height:12.3px;color:#333;">Lên lớp</div><svg class="a" style="left:1198px;top:58.30px" width="72" height="29" viewBox="1198 0 72 29">
<g transform="translate(0 0.7)"><path d="M1202.6 21.9 L1203.8 17.36 L1212.93 7.01 A2.1 2.1 0 0 1 1216.08 9.79 L1206.96 20.14 Z" fill="none" stroke="#12ae5f" stroke-width="1.5" stroke-linejoin="round"/>
<line x1="1211.2" y1="8.96" x2="1214.35" y2="11.74" stroke="#12ae5f" stroke-width="1.2"/></g>
<path d="M1237.7 6.8 H1232.5 Q1230 6.8 1230 9.3 V19.4 Q1230 21.9 1232.5 21.9 H1237.7" fill="none" stroke="#12ae5f" stroke-width="1.6"/>
<path d="M1233.2 14.4 H1243.7" stroke="#12ae5f" stroke-width="1.6"/>
<path d="M1236.7 10.1 L1233 14.4 L1236.7 18.6" fill="none" stroke="#12ae5f" stroke-width="1.6" stroke-linejoin="round" stroke-linecap="round"/>
<line x1="1251.3" y1="8.7" x2="1267.2" y2="8.7" stroke="#888" stroke-width="2"/>
<path d="M1256.3 8.2 L1257 6.6 H1262.2 L1262.9 8.2" fill="none" stroke="#888" stroke-width="1.6"/>
<path d="M1253.8 8.6 V20 Q1253.8 22 1255.8 22 H1263.2 Q1265.2 22 1265.2 20 V8.6" fill="none" stroke="#888" stroke-width="1.5"/>
<g stroke="#888" stroke-width="1.2"><line x1="1256.5" y1="12" x2="1256.5" y2="18.3"/><line x1="1259.5" y1="12" x2="1259.5" y2="18.3"/><line x1="1262.5" y1="12" x2="1262.5" y2="18.3"/></g>
</svg><div class="a" style="left:409.5px;top:88px;width:868.2px;height:29px;background:#f4f5f9;"></div><div class="a" style="left:409.5px;top:87px;width:868.2px;height:1px;background:#dfe1ec;"></div><div class="a" style="left:417px;top:93.60px;width:16.5px;height:16.5px;box-sizing:border-box;border:1px solid #d2d2d2;border-radius:3.5px;background:#fff;"></div><div class="t " style="left:450.5px;top:97.7px;font-size:12.3px;line-height:12.3px;color:#333;letter-spacing:-0.1px;">MS15004</div><div class="t " style="left:542.8px;top:96.3px;font-size:12.3px;line-height:12.3px;color:#333;">Ngô Huỳnh Gia Bảo</div><div class="t " style="left:809.6px;top:97.7px;font-size:12.3px;line-height:12.3px;color:#333;letter-spacing:0.6px;">06/02/2011</div><div class="t " style="left:896.6px;top:96.9px;font-size:12.3px;line-height:12.3px;color:#333;">Nam</div><div class="t " style="left:983.2px;top:97.7px;font-size:12.3px;line-height:12.3px;color:#333;">8B</div><div class="t " style="left:1096.3px;top:96.9px;font-size:12.3px;line-height:12.3px;color:#333;">Lưu ban</div><svg class="a" style="left:1198px;top:87.30px" width="72" height="29" viewBox="1198 0 72 29">
<g transform="translate(0 0.7)"><path d="M1202.6 21.9 L1203.8 17.36 L1212.93 7.01 A2.1 2.1 0 0 1 1216.08 9.79 L1206.96 20.14 Z" fill="none" stroke="#12ae5f" stroke-width="1.5" stroke-linejoin="round"/>
<line x1="1211.2" y1="8.96" x2="1214.35" y2="11.74" stroke="#12ae5f" stroke-width="1.2"/></g>
<path d="M1237.7 6.8 H1232.5 Q1230 6.8 1230 9.3 V19.4 Q1230 21.9 1232.5 21.9 H1237.7" fill="none" stroke="#12ae5f" stroke-width="1.6"/>
<path d="M1233.2 14.4 H1243.7" stroke="#12ae5f" stroke-width="1.6"/>
<path d="M1236.7 10.1 L1233 14.4 L1236.7 18.6" fill="none" stroke="#12ae5f" stroke-width="1.6" stroke-linejoin="round" stroke-linecap="round"/>
<line x1="1251.3" y1="8.7" x2="1267.2" y2="8.7" stroke="#888" stroke-width="2"/>
<path d="M1256.3 8.2 L1257 6.6 H1262.2 L1262.9 8.2" fill="none" stroke="#888" stroke-width="1.6"/>
<path d="M1253.8 8.6 V20 Q1253.8 22 1255.8 22 H1263.2 Q1265.2 22 1265.2 20 V8.6" fill="none" stroke="#888" stroke-width="1.5"/>
<g stroke="#888" stroke-width="1.2"><line x1="1256.5" y1="12" x2="1256.5" y2="18.3"/><line x1="1259.5" y1="12" x2="1259.5" y2="18.3"/><line x1="1262.5" y1="12" x2="1262.5" y2="18.3"/></g>
</svg><div class="a" style="left:409.5px;top:117px;width:868.2px;height:30px;background:#ffffff;"></div><div class="a" style="left:409.5px;top:116px;width:868.2px;height:1px;background:#dfe1ec;"></div><div class="a" style="left:417px;top:122.60px;width:16.5px;height:16.5px;box-sizing:border-box;border:1px solid #d2d2d2;border-radius:3.5px;background:#fff;"></div><div class="t " style="left:450.5px;top:126.7px;font-size:12.3px;line-height:12.3px;color:#333;letter-spacing:-0.1px;">MS15005</div><div class="t " style="left:542.8px;top:125.3px;font-size:12.3px;line-height:12.3px;color:#333;">Nguyễn Thiện Bảo</div><div class="t " style="left:809.6px;top:126.7px;font-size:12.3px;line-height:12.3px;color:#333;letter-spacing:0.6px;">05/03/2011</div><div class="t " style="left:896.6px;top:125.9px;font-size:12.3px;line-height:12.3px;color:#333;">Nam</div><div class="t " style="left:983.2px;top:126.7px;font-size:12.3px;line-height:12.3px;color:#333;">8B</div><div class="t " style="left:1096.3px;top:125.9px;font-size:12.3px;line-height:12.3px;color:#333;">Lưu ban</div><svg class="a" style="left:1198px;top:116.30px" width="72" height="29" viewBox="1198 0 72 29">
<g transform="translate(0 0.7)"><path d="M1202.6 21.9 L1203.8 17.36 L1212.93 7.01 A2.1 2.1 0 0 1 1216.08 9.79 L1206.96 20.14 Z" fill="none" stroke="#12ae5f" stroke-width="1.5" stroke-linejoin="round"/>
<line x1="1211.2" y1="8.96" x2="1214.35" y2="11.74" stroke="#12ae5f" stroke-width="1.2"/></g>
<path d="M1237.7 6.8 H1232.5 Q1230 6.8 1230 9.3 V19.4 Q1230 21.9 1232.5 21.9 H1237.7" fill="none" stroke="#12ae5f" stroke-width="1.6"/>
<path d="M1233.2 14.4 H1243.7" stroke="#12ae5f" stroke-width="1.6"/>
<path d="M1236.7 10.1 L1233 14.4 L1236.7 18.6" fill="none" stroke="#12ae5f" stroke-width="1.6" stroke-linejoin="round" stroke-linecap="round"/>
<line x1="1251.3" y1="8.7" x2="1267.2" y2="8.7" stroke="#888" stroke-width="2"/>
<path d="M1256.3 8.2 L1257 6.6 H1262.2 L1262.9 8.2" fill="none" stroke="#888" stroke-width="1.6"/>
<path d="M1253.8 8.6 V20 Q1253.8 22 1255.8 22 H1263.2 Q1265.2 22 1265.2 20 V8.6" fill="none" stroke="#888" stroke-width="1.5"/>
<g stroke="#888" stroke-width="1.2"><line x1="1256.5" y1="12" x2="1256.5" y2="18.3"/><line x1="1259.5" y1="12" x2="1259.5" y2="18.3"/><line x1="1262.5" y1="12" x2="1262.5" y2="18.3"/></g>
</svg><div class="a" style="left:409.5px;top:147px;width:868.2px;height:29px;background:#f4f5f9;"></div><div class="a" style="left:409.5px;top:146px;width:868.2px;height:1px;background:#dfe1ec;"></div><div class="a" style="left:417px;top:152.60px;width:16.5px;height:16.5px;box-sizing:border-box;border:1px solid #d2d2d2;border-radius:3.5px;background:#fff;"></div><div class="t " style="left:450.5px;top:155.7px;font-size:12.3px;line-height:12.3px;color:#333;letter-spacing:-0.1px;">MS15006</div><div class="t " style="left:542.8px;top:154.3px;font-size:12.3px;line-height:12.3px;color:#333;">Trần Thị Lý Diệu</div><div class="t " style="left:809.6px;top:155.7px;font-size:12.3px;line-height:12.3px;color:#333;letter-spacing:0.6px;">10/11/2011</div><div class="t " style="left:896.6px;top:154.9px;font-size:12.3px;line-height:12.3px;color:#333;">Nam</div><div class="t " style="left:983.2px;top:155.7px;font-size:12.3px;line-height:12.3px;color:#333;">8B</div><div class="t " style="left:1096.3px;top:154.9px;font-size:12.3px;line-height:12.3px;color:#333;">Lưu ban</div><svg class="a" style="left:1198px;top:146.30px" width="72" height="29" viewBox="1198 0 72 29">
<g transform="translate(0 0.7)"><path d="M1202.6 21.9 L1203.8 17.36 L1212.93 7.01 A2.1 2.1 0 0 1 1216.08 9.79 L1206.96 20.14 Z" fill="none" stroke="#12ae5f" stroke-width="1.5" stroke-linejoin="round"/>
<line x1="1211.2" y1="8.96" x2="1214.35" y2="11.74" stroke="#12ae5f" stroke-width="1.2"/></g>
<path d="M1237.7 6.8 H1232.5 Q1230 6.8 1230 9.3 V19.4 Q1230 21.9 1232.5 21.9 H1237.7" fill="none" stroke="#12ae5f" stroke-width="1.6"/>
<path d="M1233.2 14.4 H1243.7" stroke="#12ae5f" stroke-width="1.6"/>
<path d="M1236.7 10.1 L1233 14.4 L1236.7 18.6" fill="none" stroke="#12ae5f" stroke-width="1.6" stroke-linejoin="round" stroke-linecap="round"/>
<line x1="1251.3" y1="8.7" x2="1267.2" y2="8.7" stroke="#888" stroke-width="2"/>
<path d="M1256.3 8.2 L1257 6.6 H1262.2 L1262.9 8.2" fill="none" stroke="#888" stroke-width="1.6"/>
<path d="M1253.8 8.6 V20 Q1253.8 22 1255.8 22 H1263.2 Q1265.2 22 1265.2 20 V8.6" fill="none" stroke="#888" stroke-width="1.5"/>
<g stroke="#888" stroke-width="1.2"><line x1="1256.5" y1="12" x2="1256.5" y2="18.3"/><line x1="1259.5" y1="12" x2="1259.5" y2="18.3"/><line x1="1262.5" y1="12" x2="1262.5" y2="18.3"/></g>
</svg><div class="a" style="left:409.5px;top:176px;width:868.2px;height:29px;background:#ffffff;"></div><div class="a" style="left:409.5px;top:175px;width:868.2px;height:1px;background:#dfe1ec;"></div><div class="a" style="left:417px;top:181.60px;width:16.5px;height:16.5px;box-sizing:border-box;border:1px solid #d2d2d2;border-radius:3.5px;background:#fff;"></div><div class="t " style="left:450.5px;top:184.7px;font-size:12.3px;line-height:12.3px;color:#333;letter-spacing:-0.1px;">MS15007</div><div class="t " style="left:542.8px;top:183.3px;font-size:12.3px;line-height:12.3px;color:#333;">Vương Thị Mỹ Duyên</div><div class="t " style="left:809.6px;top:184.7px;font-size:12.3px;line-height:12.3px;color:#333;letter-spacing:0.6px;">03/05/2011</div><div class="t " style="left:896.6px;top:183.9px;font-size:12.3px;line-height:12.3px;color:#333;">Nữ</div><div class="t " style="left:983.2px;top:184.7px;font-size:12.3px;line-height:12.3px;color:#333;">7B</div><div class="t " style="left:1096.3px;top:183.9px;font-size:12.3px;line-height:12.3px;color:#333;">Lên lớp</div><svg class="a" style="left:1198px;top:175.30px" width="72" height="29" viewBox="1198 0 72 29">
<g transform="translate(0 0.7)"><path d="M1202.6 21.9 L1203.8 17.36 L1212.93 7.01 A2.1 2.1 0 0 1 1216.08 9.79 L1206.96 20.14 Z" fill="none" stroke="#12ae5f" stroke-width="1.5" stroke-linejoin="round"/>
<line x1="1211.2" y1="8.96" x2="1214.35" y2="11.74" stroke="#12ae5f" stroke-width="1.2"/></g>
<path d="M1237.7 6.8 H1232.5 Q1230 6.8 1230 9.3 V19.4 Q1230 21.9 1232.5 21.9 H1237.7" fill="none" stroke="#12ae5f" stroke-width="1.6"/>
<path d="M1233.2 14.4 H1243.7" stroke="#12ae5f" stroke-width="1.6"/>
<path d="M1236.7 10.1 L1233 14.4 L1236.7 18.6" fill="none" stroke="#12ae5f" stroke-width="1.6" stroke-linejoin="round" stroke-linecap="round"/>
<line x1="1251.3" y1="8.7" x2="1267.2" y2="8.7" stroke="#888" stroke-width="2"/>
<path d="M1256.3 8.2 L1257 6.6 H1262.2 L1262.9 8.2" fill="none" stroke="#888" stroke-width="1.6"/>
<path d="M1253.8 8.6 V20 Q1253.8 22 1255.8 22 H1263.2 Q1265.2 22 1265.2 20 V8.6" fill="none" stroke="#888" stroke-width="1.5"/>
<g stroke="#888" stroke-width="1.2"><line x1="1256.5" y1="12" x2="1256.5" y2="18.3"/><line x1="1259.5" y1="12" x2="1259.5" y2="18.3"/><line x1="1262.5" y1="12" x2="1262.5" y2="18.3"/></g>
</svg><div class="a" style="left:409.5px;top:205px;width:868.2px;height:29px;background:#f4f5f9;"></div><div class="a" style="left:409.5px;top:204px;width:868.2px;height:1px;background:#dfe1ec;"></div><div class="a" style="left:417px;top:210.60px;width:16.5px;height:16.5px;box-sizing:border-box;border:1px solid #d2d2d2;border-radius:3.5px;background:#fff;"></div><div class="t " style="left:450.5px;top:213.7px;font-size:12.3px;line-height:12.3px;color:#333;letter-spacing:-0.1px;">MS15008</div><div class="t " style="left:542.8px;top:212.3px;font-size:12.3px;line-height:12.3px;color:#333;">Võ Huỳnh Anh Đào</div><div class="t " style="left:809.6px;top:213.7px;font-size:12.3px;line-height:12.3px;color:#333;letter-spacing:0.6px;">31/01/2011</div><div class="t " style="left:896.6px;top:212.9px;font-size:12.3px;line-height:12.3px;color:#333;">Nữ</div><div class="t " style="left:983.2px;top:213.7px;font-size:12.3px;line-height:12.3px;color:#333;">7B</div><div class="t " style="left:1096.3px;top:212.9px;font-size:12.3px;line-height:12.3px;color:#333;">Lên lớp</div><svg class="a" style="left:1198px;top:204.30px" width="72" height="29" viewBox="1198 0 72 29">
<g transform="translate(0 0.7)"><path d="M1202.6 21.9 L1203.8 17.36 L1212.93 7.01 A2.1 2.1 0 0 1 1216.08 9.79 L1206.96 20.14 Z" fill="none" stroke="#12ae5f" stroke-width="1.5" stroke-linejoin="round"/>
<line x1="1211.2" y1="8.96" x2="1214.35" y2="11.74" stroke="#12ae5f" stroke-width="1.2"/></g>
<path d="M1237.7 6.8 H1232.5 Q1230 6.8 1230 9.3 V19.4 Q1230 21.9 1232.5 21.9 H1237.7" fill="none" stroke="#12ae5f" stroke-width="1.6"/>
<path d="M1233.2 14.4 H1243.7" stroke="#12ae5f" stroke-width="1.6"/>
<path d="M1236.7 10.1 L1233 14.4 L1236.7 18.6" fill="none" stroke="#12ae5f" stroke-width="1.6" stroke-linejoin="round" stroke-linecap="round"/>
<line x1="1251.3" y1="8.7" x2="1267.2" y2="8.7" stroke="#888" stroke-width="2"/>
<path d="M1256.3 8.2 L1257 6.6 H1262.2 L1262.9 8.2" fill="none" stroke="#888" stroke-width="1.6"/>
<path d="M1253.8 8.6 V20 Q1253.8 22 1255.8 22 H1263.2 Q1265.2 22 1265.2 20 V8.6" fill="none" stroke="#888" stroke-width="1.5"/>
<g stroke="#888" stroke-width="1.2"><line x1="1256.5" y1="12" x2="1256.5" y2="18.3"/><line x1="1259.5" y1="12" x2="1259.5" y2="18.3"/><line x1="1262.5" y1="12" x2="1262.5" y2="18.3"/></g>
</svg><div class="a" style="left:409.5px;top:234px;width:868.2px;height:29px;background:#ffffff;"></div><div class="a" style="left:409.5px;top:233px;width:868.2px;height:1px;background:#dfe1ec;"></div><div class="a" style="left:417px;top:239.60px;width:16.5px;height:16.5px;box-sizing:border-box;border:1px solid #d2d2d2;border-radius:3.5px;background:#fff;"></div><div class="t " style="left:450.5px;top:243.7px;font-size:12.3px;line-height:12.3px;color:#333;letter-spacing:-0.1px;">MS15009</div><div class="t " style="left:542.8px;top:242.3px;font-size:12.3px;line-height:12.3px;color:#333;">Huỳnh Gia Hân</div><div class="t " style="left:809.6px;top:243.7px;font-size:12.3px;line-height:12.3px;color:#333;letter-spacing:0.6px;">22/05/2011</div><div class="t " style="left:896.6px;top:242.9px;font-size:12.3px;line-height:12.3px;color:#333;">Nữ</div><div class="t " style="left:983.2px;top:243.7px;font-size:12.3px;line-height:12.3px;color:#333;">7B</div><div class="t " style="left:1096.3px;top:242.9px;font-size:12.3px;line-height:12.3px;color:#333;">Lên lớp</div><svg class="a" style="left:1198px;top:233.30px" width="72" height="29" viewBox="1198 0 72 29">
<g transform="translate(0 0.7)"><path d="M1202.6 21.9 L1203.8 17.36 L1212.93 7.01 A2.1 2.1 0 0 1 1216.08 9.79 L1206.96 20.14 Z" fill="none" stroke="#12ae5f" stroke-width="1.5" stroke-linejoin="round"/>
<line x1="1211.2" y1="8.96" x2="1214.35" y2="11.74" stroke="#12ae5f" stroke-width="1.2"/></g>
<path d="M1237.7 6.8 H1232.5 Q1230 6.8 1230 9.3 V19.4 Q1230 21.9 1232.5 21.9 H1237.7" fill="none" stroke="#12ae5f" stroke-width="1.6"/>
<path d="M1233.2 14.4 H1243.7" stroke="#12ae5f" stroke-width="1.6"/>
<path d="M1236.7 10.1 L1233 14.4 L1236.7 18.6" fill="none" stroke="#12ae5f" stroke-width="1.6" stroke-linejoin="round" stroke-linecap="round"/>
<line x1="1251.3" y1="8.7" x2="1267.2" y2="8.7" stroke="#888" stroke-width="2"/>
<path d="M1256.3 8.2 L1257 6.6 H1262.2 L1262.9 8.2" fill="none" stroke="#888" stroke-width="1.6"/>
<path d="M1253.8 8.6 V20 Q1253.8 22 1255.8 22 H1263.2 Q1265.2 22 1265.2 20 V8.6" fill="none" stroke="#888" stroke-width="1.5"/>
<g stroke="#888" stroke-width="1.2"><line x1="1256.5" y1="12" x2="1256.5" y2="18.3"/><line x1="1259.5" y1="12" x2="1259.5" y2="18.3"/><line x1="1262.5" y1="12" x2="1262.5" y2="18.3"/></g>
</svg><div class="a" style="left:409.5px;top:263px;width:868.2px;height:29px;background:#f4f5f9;"></div><div class="a" style="left:409.5px;top:262px;width:868.2px;height:1px;background:#dfe1ec;"></div><div class="a" style="left:417px;top:268.60px;width:16.5px;height:16.5px;box-sizing:border-box;border:1px solid #d2d2d2;border-radius:3.5px;background:#fff;"></div><div class="t " style="left:450.5px;top:272.7px;font-size:12.3px;line-height:12.3px;color:#333;letter-spacing:-0.1px;">MS15010</div><div class="t " style="left:542.8px;top:271.3px;font-size:12.3px;line-height:12.3px;color:#333;">Trương Thị Huỳnh Hoa</div><div class="t " style="left:809.6px;top:272.7px;font-size:12.3px;line-height:12.3px;color:#333;letter-spacing:0.6px;">14/01/2011</div><div class="t " style="left:896.6px;top:271.9px;font-size:12.3px;line-height:12.3px;color:#333;">Nữ</div><div class="t " style="left:983.2px;top:272.7px;font-size:12.3px;line-height:12.3px;color:#333;">7B</div><div class="t " style="left:1096.3px;top:271.9px;font-size:12.3px;line-height:12.3px;color:#333;">Lên lớp</div><svg class="a" style="left:1198px;top:262.30px" width="72" height="29" viewBox="1198 0 72 29">
<g transform="translate(0 0.7)"><path d="M1202.6 21.9 L1203.8 17.36 L1212.93 7.01 A2.1 2.1 0 0 1 1216.08 9.79 L1206.96 20.14 Z" fill="none" stroke="#12ae5f" stroke-width="1.5" stroke-linejoin="round"/>
<line x1="1211.2" y1="8.96" x2="1214.35" y2="11.74" stroke="#12ae5f" stroke-width="1.2"/></g>
<path d="M1237.7 6.8 H1232.5 Q1230 6.8 1230 9.3 V19.4 Q1230 21.9 1232.5 21.9 H1237.7" fill="none" stroke="#12ae5f" stroke-width="1.6"/>
<path d="M1233.2 14.4 H1243.7" stroke="#12ae5f" stroke-width="1.6"/>
<path d="M1236.7 10.1 L1233 14.4 L1236.7 18.6" fill="none" stroke="#12ae5f" stroke-width="1.6" stroke-linejoin="round" stroke-linecap="round"/>
<line x1="1251.3" y1="8.7" x2="1267.2" y2="8.7" stroke="#888" stroke-width="2"/>
<path d="M1256.3 8.2 L1257 6.6 H1262.2 L1262.9 8.2" fill="none" stroke="#888" stroke-width="1.6"/>
<path d="M1253.8 8.6 V20 Q1253.8 22 1255.8 22 H1263.2 Q1265.2 22 1265.2 20 V8.6" fill="none" stroke="#888" stroke-width="1.5"/>
<g stroke="#888" stroke-width="1.2"><line x1="1256.5" y1="12" x2="1256.5" y2="18.3"/><line x1="1259.5" y1="12" x2="1259.5" y2="18.3"/><line x1="1262.5" y1="12" x2="1262.5" y2="18.3"/></g>
</svg><div class="a" style="left:409.5px;top:292px;width:868.2px;height:30px;background:#ffffff;"></div><div class="a" style="left:409.5px;top:291px;width:868.2px;height:1px;background:#dfe1ec;"></div><div class="a" style="left:417px;top:297.60px;width:16.5px;height:16.5px;box-sizing:border-box;border:1px solid #d2d2d2;border-radius:3.5px;background:#fff;"></div><div class="t " style="left:450.5px;top:301.7px;font-size:12.3px;line-height:12.3px;color:#333;letter-spacing:-0.1px;">MS15011</div><div class="t " style="left:542.8px;top:300.3px;font-size:12.3px;line-height:12.3px;color:#333;">Thạch Thanh Hùng</div><div class="t " style="left:809.6px;top:301.7px;font-size:12.3px;line-height:12.3px;color:#333;letter-spacing:0.6px;">12/09/2011</div><div class="t " style="left:896.6px;top:300.9px;font-size:12.3px;line-height:12.3px;color:#333;">Nam</div><div class="t " style="left:983.2px;top:301.7px;font-size:12.3px;line-height:12.3px;color:#333;">7B</div><div class="t " style="left:1096.3px;top:300.9px;font-size:12.3px;line-height:12.3px;color:#333;">Lên lớp</div><svg class="a" style="left:1198px;top:291.30px" width="72" height="29" viewBox="1198 0 72 29">
<g transform="translate(0 0.7)"><path d="M1202.6 21.9 L1203.8 17.36 L1212.93 7.01 A2.1 2.1 0 0 1 1216.08 9.79 L1206.96 20.14 Z" fill="none" stroke="#12ae5f" stroke-width="1.5" stroke-linejoin="round"/>
<line x1="1211.2" y1="8.96" x2="1214.35" y2="11.74" stroke="#12ae5f" stroke-width="1.2"/></g>
<path d="M1237.7 6.8 H1232.5 Q1230 6.8 1230 9.3 V19.4 Q1230 21.9 1232.5 21.9 H1237.7" fill="none" stroke="#12ae5f" stroke-width="1.6"/>
<path d="M1233.2 14.4 H1243.7" stroke="#12ae5f" stroke-width="1.6"/>
<path d="M1236.7 10.1 L1233 14.4 L1236.7 18.6" fill="none" stroke="#12ae5f" stroke-width="1.6" stroke-linejoin="round" stroke-linecap="round"/>
<line x1="1251.3" y1="8.7" x2="1267.2" y2="8.7" stroke="#888" stroke-width="2"/>
<path d="M1256.3 8.2 L1257 6.6 H1262.2 L1262.9 8.2" fill="none" stroke="#888" stroke-width="1.6"/>
<path d="M1253.8 8.6 V20 Q1253.8 22 1255.8 22 H1263.2 Q1265.2 22 1265.2 20 V8.6" fill="none" stroke="#888" stroke-width="1.5"/>
<g stroke="#888" stroke-width="1.2"><line x1="1256.5" y1="12" x2="1256.5" y2="18.3"/><line x1="1259.5" y1="12" x2="1259.5" y2="18.3"/><line x1="1262.5" y1="12" x2="1262.5" y2="18.3"/></g>
</svg><div class="a" style="left:409.5px;top:322px;width:868.2px;height:29px;background:#f4f5f9;"></div><div class="a" style="left:409.5px;top:321px;width:868.2px;height:1px;background:#dfe1ec;"></div><div class="a" style="left:417px;top:327.60px;width:16.5px;height:16.5px;box-sizing:border-box;border:1px solid #d2d2d2;border-radius:3.5px;background:#fff;"></div><div class="t " style="left:450.5px;top:330.7px;font-size:12.3px;line-height:12.3px;color:#333;letter-spacing:-0.1px;">MS15012</div><div class="t " style="left:542.8px;top:329.3px;font-size:12.3px;line-height:12.3px;color:#333;">Lâm Thị Thúy Huỳnh</div><div class="t " style="left:809.6px;top:330.7px;font-size:12.3px;line-height:12.3px;color:#333;letter-spacing:0.6px;">16/04/2011</div><div class="t " style="left:896.6px;top:329.9px;font-size:12.3px;line-height:12.3px;color:#333;">Nữ</div><div class="t " style="left:983.2px;top:330.7px;font-size:12.3px;line-height:12.3px;color:#333;">7B</div><div class="t " style="left:1096.3px;top:329.9px;font-size:12.3px;line-height:12.3px;color:#333;">Lên lớp</div><svg class="a" style="left:1198px;top:321.30px" width="72" height="29" viewBox="1198 0 72 29">
<g transform="translate(0 0.7)"><path d="M1202.6 21.9 L1203.8 17.36 L1212.93 7.01 A2.1 2.1 0 0 1 1216.08 9.79 L1206.96 20.14 Z" fill="none" stroke="#12ae5f" stroke-width="1.5" stroke-linejoin="round"/>
<line x1="1211.2" y1="8.96" x2="1214.35" y2="11.74" stroke="#12ae5f" stroke-width="1.2"/></g>
<path d="M1237.7 6.8 H1232.5 Q1230 6.8 1230 9.3 V19.4 Q1230 21.9 1232.5 21.9 H1237.7" fill="none" stroke="#12ae5f" stroke-width="1.6"/>
<path d="M1233.2 14.4 H1243.7" stroke="#12ae5f" stroke-width="1.6"/>
<path d="M1236.7 10.1 L1233 14.4 L1236.7 18.6" fill="none" stroke="#12ae5f" stroke-width="1.6" stroke-linejoin="round" stroke-linecap="round"/>
<line x1="1251.3" y1="8.7" x2="1267.2" y2="8.7" stroke="#888" stroke-width="2"/>
<path d="M1256.3 8.2 L1257 6.6 H1262.2 L1262.9 8.2" fill="none" stroke="#888" stroke-width="1.6"/>
<path d="M1253.8 8.6 V20 Q1253.8 22 1255.8 22 H1263.2 Q1265.2 22 1265.2 20 V8.6" fill="none" stroke="#888" stroke-width="1.5"/>
<g stroke="#888" stroke-width="1.2"><line x1="1256.5" y1="12" x2="1256.5" y2="18.3"/><line x1="1259.5" y1="12" x2="1259.5" y2="18.3"/><line x1="1262.5" y1="12" x2="1262.5" y2="18.3"/></g>
</svg><div class="a" style="left:409.5px;top:351px;width:868.2px;height:29px;background:#ffffff;"></div><div class="a" style="left:409.5px;top:350px;width:868.2px;height:1px;background:#dfe1ec;"></div><div class="a" style="left:417px;top:356.60px;width:16.5px;height:16.5px;box-sizing:border-box;border:1px solid #d2d2d2;border-radius:3.5px;background:#fff;"></div><div class="t " style="left:450.5px;top:359.7px;font-size:12.3px;line-height:12.3px;color:#333;letter-spacing:-0.1px;">MS15013</div><div class="t " style="left:542.8px;top:358.3px;font-size:12.3px;line-height:12.3px;color:#333;">Nguyễn Bùi Đăng Khoa</div><div class="t " style="left:809.6px;top:359.7px;font-size:12.3px;line-height:12.3px;color:#333;letter-spacing:0.6px;">04/10/2011</div><div class="t " style="left:896.6px;top:358.9px;font-size:12.3px;line-height:12.3px;color:#333;">Nam</div><div class="t " style="left:983.2px;top:359.7px;font-size:12.3px;line-height:12.3px;color:#333;">7B</div><div class="t " style="left:1096.3px;top:358.9px;font-size:12.3px;line-height:12.3px;color:#333;">Lên lớp</div><svg class="a" style="left:1198px;top:350.30px" width="72" height="29" viewBox="1198 0 72 29">
<g transform="translate(0 0.7)"><path d="M1202.6 21.9 L1203.8 17.36 L1212.93 7.01 A2.1 2.1 0 0 1 1216.08 9.79 L1206.96 20.14 Z" fill="none" stroke="#12ae5f" stroke-width="1.5" stroke-linejoin="round"/>
<line x1="1211.2" y1="8.96" x2="1214.35" y2="11.74" stroke="#12ae5f" stroke-width="1.2"/></g>
<path d="M1237.7 6.8 H1232.5 Q1230 6.8 1230 9.3 V19.4 Q1230 21.9 1232.5 21.9 H1237.7" fill="none" stroke="#12ae5f" stroke-width="1.6"/>
<path d="M1233.2 14.4 H1243.7" stroke="#12ae5f" stroke-width="1.6"/>
<path d="M1236.7 10.1 L1233 14.4 L1236.7 18.6" fill="none" stroke="#12ae5f" stroke-width="1.6" stroke-linejoin="round" stroke-linecap="round"/>
<line x1="1251.3" y1="8.7" x2="1267.2" y2="8.7" stroke="#888" stroke-width="2"/>
<path d="M1256.3 8.2 L1257 6.6 H1262.2 L1262.9 8.2" fill="none" stroke="#888" stroke-width="1.6"/>
<path d="M1253.8 8.6 V20 Q1253.8 22 1255.8 22 H1263.2 Q1265.2 22 1265.2 20 V8.6" fill="none" stroke="#888" stroke-width="1.5"/>
<g stroke="#888" stroke-width="1.2"><line x1="1256.5" y1="12" x2="1256.5" y2="18.3"/><line x1="1259.5" y1="12" x2="1259.5" y2="18.3"/><line x1="1262.5" y1="12" x2="1262.5" y2="18.3"/></g>
</svg><div class="a" style="left:409.5px;top:380px;width:868.2px;height:29px;background:#f4f5f9;"></div><div class="a" style="left:409.5px;top:379px;width:868.2px;height:1px;background:#dfe1ec;"></div><div class="a" style="left:417px;top:385.60px;width:16.5px;height:16.5px;box-sizing:border-box;border:1px solid #d2d2d2;border-radius:3.5px;background:#fff;"></div><div class="t " style="left:450.5px;top:389.7px;font-size:12.3px;line-height:12.3px;color:#333;letter-spacing:-0.1px;">MS15014</div><div class="t " style="left:542.8px;top:388.3px;font-size:12.3px;line-height:12.3px;color:#333;">Lâm Trung Kiên</div><div class="t " style="left:809.6px;top:389.7px;font-size:12.3px;line-height:12.3px;color:#333;letter-spacing:0.6px;">26/08/2011</div><div class="t " style="left:896.6px;top:388.9px;font-size:12.3px;line-height:12.3px;color:#333;">Nam</div><div class="t " style="left:983.2px;top:389.7px;font-size:12.3px;line-height:12.3px;color:#333;">7B</div><div class="t " style="left:1096.3px;top:388.9px;font-size:12.3px;line-height:12.3px;color:#333;">Lên lớp</div><svg class="a" style="left:1198px;top:379.30px" width="72" height="29" viewBox="1198 0 72 29">
<g transform="translate(0 0.7)"><path d="M1202.6 21.9 L1203.8 17.36 L1212.93 7.01 A2.1 2.1 0 0 1 1216.08 9.79 L1206.96 20.14 Z" fill="none" stroke="#12ae5f" stroke-width="1.5" stroke-linejoin="round"/>
<line x1="1211.2" y1="8.96" x2="1214.35" y2="11.74" stroke="#12ae5f" stroke-width="1.2"/></g>
<path d="M1237.7 6.8 H1232.5 Q1230 6.8 1230 9.3 V19.4 Q1230 21.9 1232.5 21.9 H1237.7" fill="none" stroke="#12ae5f" stroke-width="1.6"/>
<path d="M1233.2 14.4 H1243.7" stroke="#12ae5f" stroke-width="1.6"/>
<path d="M1236.7 10.1 L1233 14.4 L1236.7 18.6" fill="none" stroke="#12ae5f" stroke-width="1.6" stroke-linejoin="round" stroke-linecap="round"/>
<line x1="1251.3" y1="8.7" x2="1267.2" y2="8.7" stroke="#888" stroke-width="2"/>
<path d="M1256.3 8.2 L1257 6.6 H1262.2 L1262.9 8.2" fill="none" stroke="#888" stroke-width="1.6"/>
<path d="M1253.8 8.6 V20 Q1253.8 22 1255.8 22 H1263.2 Q1265.2 22 1265.2 20 V8.6" fill="none" stroke="#888" stroke-width="1.5"/>
<g stroke="#888" stroke-width="1.2"><line x1="1256.5" y1="12" x2="1256.5" y2="18.3"/><line x1="1259.5" y1="12" x2="1259.5" y2="18.3"/><line x1="1262.5" y1="12" x2="1262.5" y2="18.3"/></g>
</svg><div class="a" style="left:409.5px;top:409px;width:868.2px;height:26px;background:#ffffff;"></div><div class="a" style="left:409.5px;top:408px;width:868.2px;height:1px;background:#dfe1ec;"></div><div class="a" style="left:417px;top:414.60px;width:16.5px;height:16.5px;box-sizing:border-box;border:1px solid #d2d2d2;border-radius:3.5px;background:#fff;"></div><div class="t " style="left:450.5px;top:418.7px;font-size:12.3px;line-height:12.3px;color:#333;letter-spacing:-0.1px;">MS15015</div><div class="t " style="left:542.8px;top:417.3px;font-size:12.3px;line-height:12.3px;color:#333;">Nguyễn Văn Quốc Kiệt</div><div class="t " style="left:809.6px;top:418.7px;font-size:12.3px;line-height:12.3px;color:#333;letter-spacing:0.6px;">03/11/2010</div><div class="t " style="left:896.6px;top:417.9px;font-size:12.3px;line-height:12.3px;color:#333;">Nam</div><div class="t " style="left:983.2px;top:418.7px;font-size:12.3px;line-height:12.3px;color:#333;">7B</div><div class="t " style="left:1096.3px;top:417.9px;font-size:12.3px;line-height:12.3px;color:#333;">Lên lớp</div><svg class="a" style="left:1198px;top:408.30px" width="72" height="29" viewBox="1198 0 72 29">
<g transform="translate(0 0.7)"><path d="M1202.6 21.9 L1203.8 17.36 L1212.93 7.01 A2.1 2.1 0 0 1 1216.08 9.79 L1206.96 20.14 Z" fill="none" stroke="#12ae5f" stroke-width="1.5" stroke-linejoin="round"/>
<line x1="1211.2" y1="8.96" x2="1214.35" y2="11.74" stroke="#12ae5f" stroke-width="1.2"/></g>
<path d="M1237.7 6.8 H1232.5 Q1230 6.8 1230 9.3 V19.4 Q1230 21.9 1232.5 21.9 H1237.7" fill="none" stroke="#12ae5f" stroke-width="1.6"/>
<path d="M1233.2 14.4 H1243.7" stroke="#12ae5f" stroke-width="1.6"/>
<path d="M1236.7 10.1 L1233 14.4 L1236.7 18.6" fill="none" stroke="#12ae5f" stroke-width="1.6" stroke-linejoin="round" stroke-linecap="round"/>
<line x1="1251.3" y1="8.7" x2="1267.2" y2="8.7" stroke="#888" stroke-width="2"/>
<path d="M1256.3 8.2 L1257 6.6 H1262.2 L1262.9 8.2" fill="none" stroke="#888" stroke-width="1.6"/>
<path d="M1253.8 8.6 V20 Q1253.8 22 1255.8 22 H1263.2 Q1265.2 22 1265.2 20 V8.6" fill="none" stroke="#888" stroke-width="1.5"/>
<g stroke="#888" stroke-width="1.2"><line x1="1256.5" y1="12" x2="1256.5" y2="18.3"/><line x1="1259.5" y1="12" x2="1259.5" y2="18.3"/><line x1="1262.5" y1="12" x2="1262.5" y2="18.3"/></g>
</svg></div><div class="a" style="left:441.0px;top:160.5px;width:1px;height:66.5px;background:#dfe1ec;"></div><div class="a" style="left:441.0px;top:256px;width:1px;height:405.5px;background:#dfe1ec;"></div><div class="a" style="left:535.0px;top:160.5px;width:1px;height:501.0px;background:#dfe1ec;"></div><div class="a" style="left:796.0px;top:160.5px;width:1px;height:501.0px;background:#dfe1ec;"></div><div class="a" style="left:888.0px;top:160.5px;width:1px;height:501.0px;background:#dfe1ec;"></div><div class="a" style="left:975.0px;top:160.5px;width:1px;height:501.0px;background:#dfe1ec;"></div><div class="a" style="left:1086.0px;top:160.5px;width:1px;height:501.0px;background:#dfe1ec;"></div><div class="a" style="left:1188.3px;top:160.5px;width:1px;height:501.0px;background:#dfe1ec;"></div><div class="a" style="left:409.0px;top:160px;width:869.2px;height:554px;box-sizing:border-box;border:1px solid #dfe1ec;"></div><div class="a" style="left:409.5px;top:226.9px;width:868.2px;height:1px;background:#dfe1ec;"></div><div class="a" style="left:409.5px;top:661px;width:868.2px;height:1px;background:#dfe1ec;"></div><div class="t" style="left:288.5px;width:400px;text-align:center;top:170.7px;font-size:12.9px;line-height:12.9px;color:#555;">Mã học sinh</div><div class="t" style="left:466.0px;width:400px;text-align:center;top:170.7px;font-size:12.9px;line-height:12.9px;color:#555;">Họ tên</div><div class="t" style="left:642.5px;width:400px;text-align:center;top:170.7px;font-size:12.9px;line-height:12.9px;color:#555;">Ngày sinh</div><div class="t" style="left:732.0px;width:400px;text-align:center;top:170.7px;font-size:12.9px;line-height:12.9px;color:#555;">Giới tính</div><div class="t" style="left:831.0px;width:400px;text-align:center;top:170.7px;font-size:12.9px;line-height:12.9px;color:#555;">Lớp cũ</div><div class="t" style="left:937.6px;width:400px;text-align:center;top:170.7px;font-size:12.9px;line-height:12.9px;color:#555;">Trạng thái</div><div class="a" style="left:417px;top:185.3px;width:16.5px;height:16.5px;box-sizing:border-box;border:1px solid #d2d2d2;border-radius:3.5px;background:#fff;"></div><div class="a" style="left:449.5px;top:193.3px;width:78.1px;height:25.2px;box-sizing:border-box;border:1px solid #d9dbe6;border-radius:2px;background:#fff;"></div><svg class="a" style="left:456.0px;top:201.2px" width="11" height="11" viewBox="0 0 11 11"><path d="M0.8 1 H10.2 L6.4 5.6 V10 L4.6 8.8 V5.6 Z" fill="none" stroke="#666b7a" stroke-width="1" stroke-linejoin="round"/></svg><div class="a" style="left:543.3px;top:193.3px;width:244.9px;height:25.2px;box-sizing:border-box;border:1px solid #d9dbe6;border-radius:2px;background:#fff;"></div><svg class="a" style="left:549.8px;top:201.2px" width="11" height="11" viewBox="0 0 11 11"><path d="M0.8 1 H10.2 L6.4 5.6 V10 L4.6 8.8 V5.6 Z" fill="none" stroke="#666b7a" stroke-width="1" stroke-linejoin="round"/></svg><div class="a" style="left:804.4px;top:193.3px;width:76.1px;height:25.2px;box-sizing:border-box;border:1px solid #d9dbe6;border-radius:2px;background:#fff;"></div><svg class="a" style="left:810.9px;top:201.2px" width="11" height="11" viewBox="0 0 11 11"><path d="M0.8 1 H10.2 L6.4 5.6 V10 L4.6 8.8 V5.6 Z" fill="none" stroke="#666b7a" stroke-width="1" stroke-linejoin="round"/></svg><svg class="a" style="left:857px;top:198px" width="17" height="15" viewBox="0 0 17 15">
<rect x="1.2" y="2.5" width="14.6" height="11.5" rx="2" fill="none" stroke="#19ad63" stroke-width="1.3"/>
<line x1="1.2" y1="6" x2="15.8" y2="6" stroke="#19ad63" stroke-width="1.2"/>
<line x1="4.5" y1="0.8" x2="4.5" y2="3.5" stroke="#19ad63" stroke-width="1.3"/><line x1="12.5" y1="0.8" x2="12.5" y2="3.5" stroke="#19ad63" stroke-width="1.3"/>
<g fill="#19ad63"><rect x="3.8" y="8" width="2" height="1.3"/><rect x="7.5" y="8" width="2" height="1.3"/><rect x="11" y="8" width="2" height="1.3"/><rect x="3.8" y="10.8" width="2" height="1.3"/><rect x="7.5" y="10.8" width="2" height="1.3"/></g>
</svg><div class="a" style="left:896.4px;top:193.3px;width:71.1px;height:25.2px;box-sizing:border-box;border:1px solid #d9dbe6;border-radius:2px;background:#fff;"></div><svg class="a" style="left:902.9px;top:201.2px" width="11" height="11" viewBox="0 0 11 11"><path d="M0.8 1 H10.2 L6.4 5.6 V10 L4.6 8.8 V5.6 Z" fill="none" stroke="#666b7a" stroke-width="1" stroke-linejoin="round"/></svg><svg class="a" style="left:950.5px;top:202px" width="11" height="8" viewBox="0 0 11 8"><path d="M1 1.5 L5.5 6 L10 1.5" fill="none" stroke="#555" stroke-width="1.3"/></svg><div class="a" style="left:983px;top:193.3px;width:95.7px;height:25.2px;box-sizing:border-box;border:1px solid #d9dbe6;border-radius:2px;background:#fff;"></div><svg class="a" style="left:989.5px;top:201.2px" width="11" height="11" viewBox="0 0 11 11"><path d="M0.8 1 H10.2 L6.4 5.6 V10 L4.6 8.8 V5.6 Z" fill="none" stroke="#666b7a" stroke-width="1" stroke-linejoin="round"/></svg><div class="a" style="left:1094.3px;top:193.3px;width:86.5px;height:25.2px;box-sizing:border-box;border:1px solid #d9dbe6;border-radius:2px;background:#fff;"></div><svg class="a" style="left:1100.8px;top:201.2px" width="11" height="11" viewBox="0 0 11 11"><path d="M0.8 1 H10.2 L6.4 5.6 V10 L4.6 8.8 V5.6 Z" fill="none" stroke="#666b7a" stroke-width="1" stroke-linejoin="round"/></svg><svg class="a" style="left:1163.8px;top:202px" width="11" height="8" viewBox="0 0 11 8"><path d="M1 1.5 L5.5 6 L10 1.5" fill="none" stroke="#555" stroke-width="1.3"/></svg><div class="a" style="left:1281px;top:226.7px;width:4.5px;height:98.6px;border-radius:3px;background:#b8b8b8;"></div><div class="t " style="left:423.0px;top:683.0px;font-size:12.5px;line-height:12.5px;color:#555a6e;">Tổng: 45 kết quả</div><div class="a" style="left:1078.5px;top:673px;width:89px;height:30px;border-radius:3px;box-sizing:border-box;border:1px solid #d2d2d8;background:#fff;"></div><div class="t " style="left:1101.0px;top:682.7px;font-size:12.5px;line-height:12.5px;color:#333;">Quay lại</div><div class="a" style="left:1176px;top:673px;width:90px;height:30px;border-radius:3.5px;background:#07ad62;"></div><div class="t " style="left:1198.7px;top:682.6px;font-size:12.6px;line-height:12.6px;color:#fff;">Tiếp tục</div><svg class="a" style="left:995px;top:215px;overflow:visible" width="270" height="160" viewBox="0 0 270 160">
<defs><filter id="sh" x="-20%" y="-20%" width="140%" height="150%"><feDropShadow dx="0" dy="2.5" stdDeviation="3" flood-color="#000" flood-opacity="0.35"/></filter></defs>
<g filter="url(#sh)">
<path d="M149 71 L241.9 41.6 L178.4 78.3 V134.6 Q178.4 142.6 170.4 142.6 H20.4 Q12.4 142.6 12.4 134.6 V79 Q12.4 71 20.4 71 Z" fill="#ff4646"/>
<rect x="230.5" y="8.8" width="22.3" height="31.5" fill="none" stroke="#ee3b3f" stroke-width="2.8"/>
</g>
</svg><div class="t" style="left:990.5px;width:200px;text-align:center;top:304.6px;font-size:15.4px;line-height:15.4px;color:#fff;">GV có thể tự xếp học</div><div class="t" style="left:990.5px;width:200px;text-align:center;top:323.0px;font-size:15.4px;line-height:15.4px;color:#fff;">sinh vào lớp khác</div>
</body></html>
